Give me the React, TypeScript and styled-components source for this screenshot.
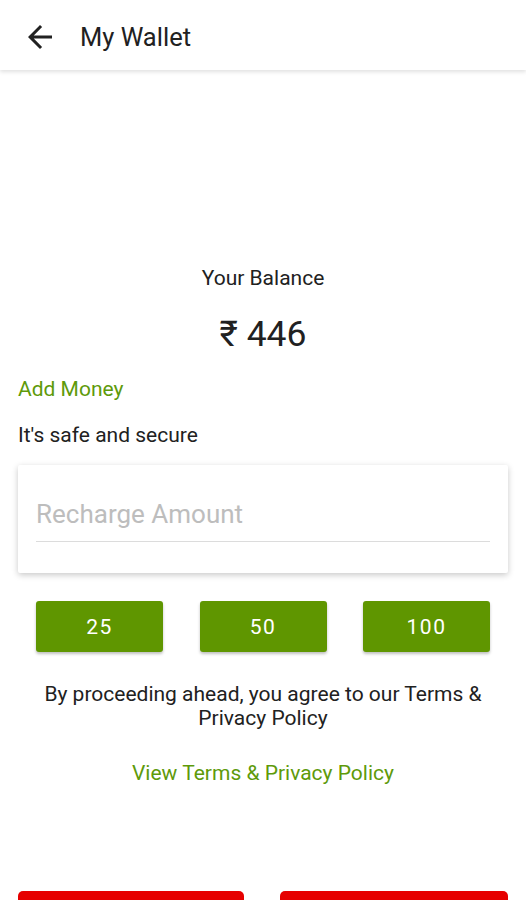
import React from 'react';
import styled, { createGlobalStyle } from 'styled-components';

const GlobalStyle = createGlobalStyle`
  html, body {
    margin: 0;
    padding: 0;
    background: #ffffff;
  }
  body {
    font-family: Roboto, 'Noto Sans', sans-serif;
    color: #212121;
  }
`;

const Page = styled.div`
  width: 526px;
  height: 900px;
  overflow: hidden;
  display: flex;
  flex-direction: column;
`;

const Header = styled.header`
  flex-shrink: 0;
  height: 70px;
  box-sizing: border-box;
  padding: 4px 0 0 22px;
  display: flex;
  align-items: center;
  box-shadow: 0 2px 4px rgba(0, 0, 0, 0.12);
  position: relative;
  z-index: 1;
  .back-icon {
    width: 36px;
    height: 36px;
    display: block;
    color: #212121;
  }
`;

const Title = styled.h1`
  margin: 0 0 0 22px;
  font-size: 25.5px;
  font-weight: 400;
  color: #212121;
`;

const Content = styled.main`
  flex-shrink: 0;
  display: flex;
  flex-direction: column;
  padding: 0 18px;
`;

const BalanceLabel = styled.div`
  margin-top: 195px;
  text-align: center;
  font-size: 21px;
  line-height: 26px;
`;

const BalanceValue = styled.div`
  margin-top: 23px;
  text-align: center;
  font-size: 35.5px;
  line-height: 40px;
`;

const GreenLink = styled.div<{ $center?: boolean; $top: number }>`
  margin-top: ${(p) => p.$top}px;
  color: #5e9a0a;
  font-size: 21px;
  line-height: 26px;
  text-align: ${(p) => (p.$center ? 'center' : 'left')};
`;

const Note = styled.div`
  margin-top: 20px;
  font-size: 21px;
  line-height: 26px;
`;

const Card = styled.div`
  margin-top: 17px;
  height: 108px;
  background: #ffffff;
  box-shadow: 0 2px 6px rgba(0, 0, 0, 0.22);
  border-radius: 2px;
  padding: 0 18px;
  box-sizing: border-box;
  display: flex;
  flex-direction: column;
`;

const AmountInput = styled.input`
  margin-top: 34px;
  height: 43px;
  box-sizing: border-box;
  border: 0;
  border-bottom: 1px solid #dcdcdc;
  outline: none;
  font-family: Roboto, sans-serif;
  font-size: 26px;
  line-height: 30px;
  padding: 0 0 12px 0;
  color: #212121;
  background: transparent;
  &::placeholder {
    color: #bdbdbd;
  }
`;

const QuickRow = styled.div`
  margin-top: 28px;
  display: grid;
  grid-template-columns: repeat(3, 127px);
  justify-content: space-between;
  padding: 0 18px;
`;

const QuickButton = styled.button`
  height: 51px;
  border: 0;
  border-radius: 3px;
  background: #5f9600;
  color: #ffffff;
  font-family: Roboto, sans-serif;
  font-size: 21px;
  letter-spacing: 1.5px;
  box-shadow: 0 2px 3px rgba(0, 0, 0, 0.25);
`;

const Terms = styled.p`
  margin: 30px 0 0;
  text-align: center;
  font-size: 21px;
  line-height: 24px;
  color: #212121;
`;

const BottomRow = styled.div`
  margin-top: 105px;
  display: grid;
  grid-template-columns: 226px 228px;
  justify-content: space-between;
`;

const RedButton = styled.button`
  height: 48px;
  border: 0;
  border-radius: 5px;
  background: #e60000;
`;

export default function App() {
  return (
    <Page>
      <GlobalStyle />
      <Header>
        <svg className="back-icon" viewBox="0 0 24 24" fill="currentColor" xmlns="http://www.w3.org/2000/svg">
          <path d="M20 11H7.83l5.59-5.59L12 4l-8 8 8 8 1.41-1.41L7.83 13H20v-2z" />
        </svg>
        <Title>My Wallet</Title>
      </Header>
      <Content>
        <BalanceLabel>Your Balance</BalanceLabel>
        <BalanceValue>₹ 446</BalanceValue>
        <GreenLink $top={22}>Add Money</GreenLink>
        <Note>It's safe and secure</Note>
        <Card>
          <AmountInput type="text" placeholder="Recharge Amount" />
        </Card>
        <QuickRow>
          <QuickButton type="button">25</QuickButton>
          <QuickButton type="button">50</QuickButton>
          <QuickButton type="button">100</QuickButton>
        </QuickRow>
        <Terms>
          By proceeding ahead, you agree to our Terms &amp;
          <br />
          Privacy Policy
        </Terms>
        <GreenLink $center $top={30}>View Terms &amp; Privacy Policy</GreenLink>
        <BottomRow>
          <RedButton type="button" />
          <RedButton type="button" />
        </BottomRow>
      </Content>
    </Page>
  );
}
